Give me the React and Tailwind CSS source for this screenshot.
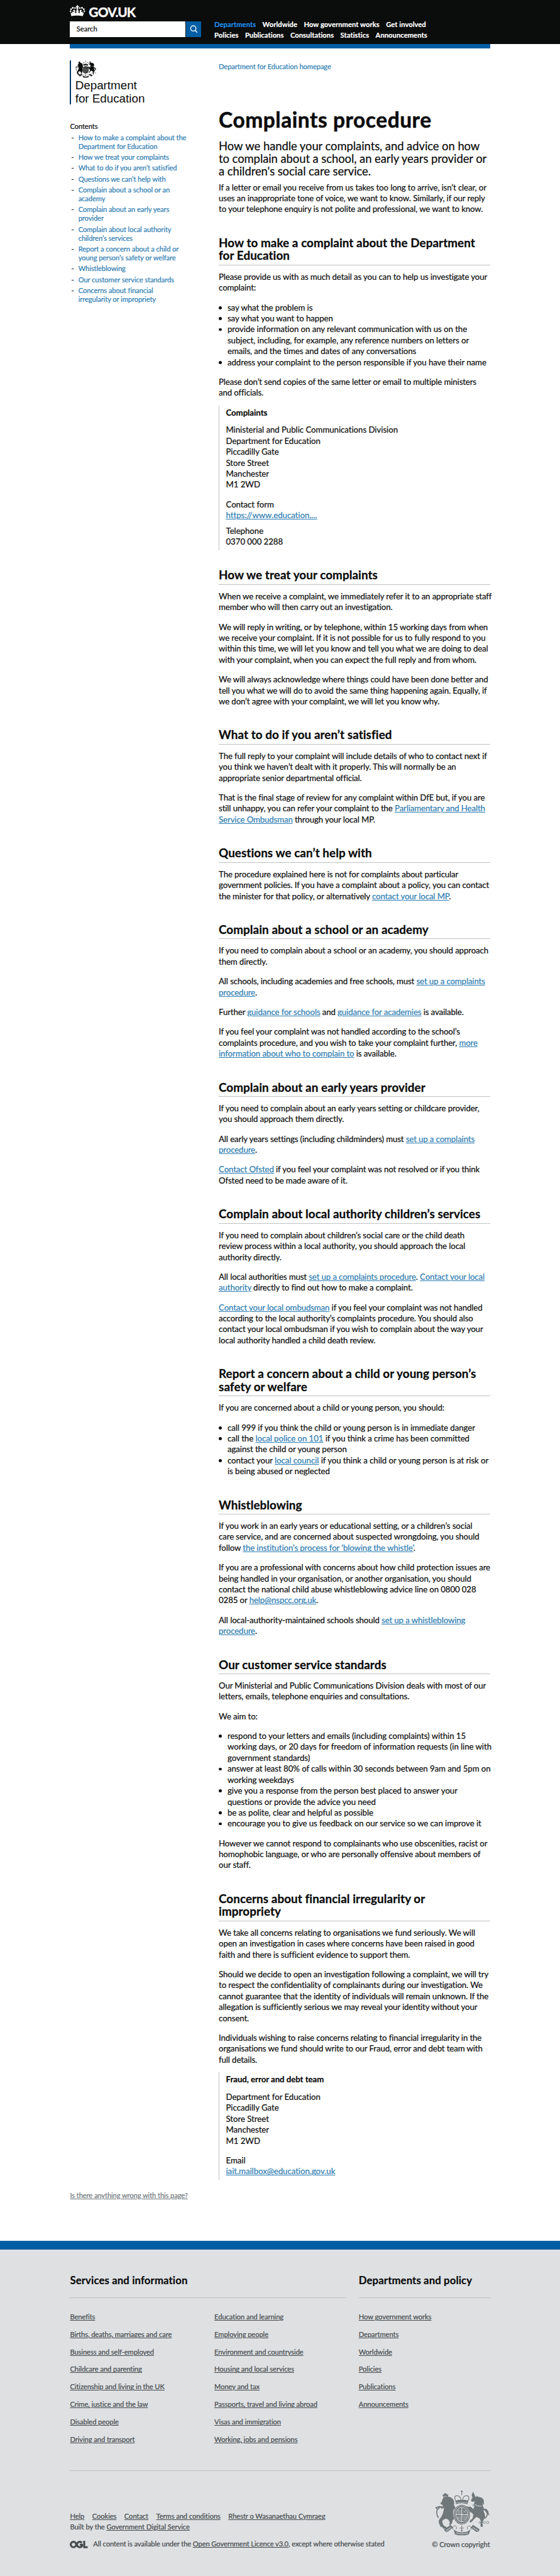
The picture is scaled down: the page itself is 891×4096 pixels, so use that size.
import React from "react";

const A = ({ children }) => <a className="text-[#2e7db2] underline decoration-1 underline-offset-[2px]">{children}</a>;

/* Each child is one line of copy. */
const Lines = ({ items }) =>
  items.map((line, i) => (
    <span key={i} className="block whitespace-nowrap">
      {line}
    </span>
  ));

const P = ({ lines, className = "mt-5" }) => (
  <p className={className}>
    <Lines items={lines} />
  </p>
);

const H2 = ({ lines, className = "mt-[49px]" }) => (
  <h2
    className={`${className} mb-[14.500px] border-b border-[#bfc1c3] pb-[5.500px] text-[27px] leading-[29.500px] font-bold tracking-[0.130px] [-webkit-text-stroke:0.4px]`}
  >
    <Lines items={lines} />
  </h2>
);

const Bullets = ({ items }) => (
  <ul className="mt-5 tracking-[-0.080px]">
    {items.map((lines, i) => (
      <li key={i} className="flex">
        <span className="mt-[9px] mr-[13px] size-[7px] shrink-0 rounded-full bg-[#0b0c0c]" />
        <span>
          <Lines items={lines} />
        </span>
      </li>
    ))}
  </ul>
);

const Crest = ({ className }) => (
  <svg viewBox="28 22 378 310" className={className} fill="none" stroke="currentColor" strokeWidth="4">
    <g fill="currentColor" stroke="none">
      <path d="M84 66l-5-18 8 4 5-9 7-4 6 4 7 8 8-5-3 19-16-3z" />
      <path d="M85 70l14-5 18-1 16 3 14 10 10 13 3 20-2 14 9 10-2 16-9 3-4 18 1 26 6 20-9 8-6 24-13 12-6-3 5-18-10-17-15-7-22 8-5 10 3 16 10 16 14 6 2 10-22 3-8-11-10-2-10-20-4-20 7-14 12-16 10-22 6-24 2-14-16 5-9-10 8-6 12 2-8-14-9-3-3-8 8-6z" />
      <path d="M30 137l12-3 13-5 15 2-8 6-15 4-9 12z" />
      <path d="M290 30l16 36 8 2-4-10 18 8 22 6 12 14 4 26-4 10-7-20 2 24 6 18-1 20 8 20 4 22-16 26-4 20 4 18-12 4-6-12 4-26-8-20-22-12-16 14-18 20-12 4-2-10 20-18 6-24-8-12-16-10-8-20-16-6-3-12 20 6 10-4 10 12 10 6 8-16-2-22 4-14-14 2-11-4 2-12 8-14-6-16z" />
      <path d="M404 195l-14-10-10-16-14-14-10-4 8-5 18 4 12 14 4 18z" />
      <path d="M168 92l4 24 18-4 22-2 24 3 17 4 4-24-20-6h-48z" />
      <circle cx="212" cy="28" r="6" />
      <path d="M90 289l46-30 16 18-40 30-16-4z" />
      <path d="M335 289l-46-30-16 18 40 30 16-4z" />
      <path d="M156 292l28 14 30 4 32-4 25-14-10 32-25 6h-46l-25-6z" />
    </g>
    <path d="M74 132c-14 8-32 14-34 34-2 16 4 32 12 44M360 152c18 6 32 22 26 42-4 14-14 22-24 18" strokeWidth="7" />
    <path d="M172 96c-12-16-12-36 4-38s30 10 32 34M252 96c14-16 12-36-4-38s-28 10-32 34M212 34v20" strokeWidth="5" />
    <path d="M166 110c20-8 72-8 94 0" className="stroke-white/70" strokeWidth="3" />
    <g fill="currentColor" stroke="none">
      <ellipse cx="212" cy="188" rx="57" ry="68" />
    </g>
    <g className="stroke-white/80">
      <ellipse cx="212" cy="188" rx="50" ry="61" strokeWidth="5" strokeDasharray="5 4" />
      <ellipse cx="212" cy="188" rx="40" ry="49" strokeWidth="4" />
      <path d="M212 140v96M173 188h78" strokeWidth="5" />
      <path d="M182 158h24M182 168h24M182 177h24M220 158l22 20M222 176l18-18M184 200c0 20 8 26 20 32M192 198v20M202 198v28M220 199h26M220 209h24M220 219h18" strokeWidth="3" />
    </g>
    <path d="M212 262v42M200 284c0-12 8-8 12 6M224 284c0-12-8-8-12 6M204 298h16" strokeWidth="4" />
    <path d="M156 292c-10-6-8-24 6-26s18 14 10 24M270 292c10-6 8-24-6-26s-18 14-10 24" strokeWidth="4" />
    <path d="M104 298l34-22M322 298l-34-22M172 313c22 8 60 8 84 0" className="stroke-white/80" strokeWidth="7" strokeDasharray="4 3" />
    <g strokeWidth="3">
      <circle cx="294" cy="124" r="6" />
      <circle cx="278" cy="146" r="6" />
      <circle cx="346" cy="216" r="6" />
      <circle cx="336" cy="242" r="6" />
      <circle cx="350" cy="256" r="5" />
      <circle cx="368" cy="242" r="7" />
      <circle cx="390" cy="242" r="8" />
    </g>
    <path d="M306 118c14 12 30 14 42 10" className="stroke-white/80" strokeWidth="6" strokeDasharray="6 4" />
  </svg>
);

const Crown = () => (
  <svg viewBox="0 0 70 52" className="h-[26px] w-[35px] fill-white">
    <circle cx="35" cy="13" r="5" />
    <path d="M33 0h4v5h5v4h-5v4h-4V9h-5V5h5z" />
    <circle cx="24" cy="14" r="3.6" />
    <circle cx="14" cy="13" r="4.2" />
    <circle cx="6" cy="19" r="4" />
    <circle cx="3.500" cy="28" r="3.500" />
    <circle cx="46" cy="14" r="3.6" />
    <circle cx="56" cy="13" r="4.2" />
    <circle cx="64" cy="19" r="4" />
    <circle cx="66.500" cy="28" r="3.500" />
    <path d="M4 33l8 5-2-10c3 5 8 5 9 0l-4-1c0-6 7-7 9-3 2 5-2 8 0 12 4 1 8-2 8-6l-4 1c-1-5 2-6 5-6l-3-6h10l-3 6c3 0 6 1 5 6l-4-1c0 4 4 7 8 6 2-4-2-7 0-12 2-4 9-3 9 3l-4 1c1 5 6 5 9 0l-2 10 8-5-7 18c-14-4-38-4-52 0z" />
  </svg>
);

const CONTENTS = [
  ["How to make a complaint about the", "Department for Education"],
  ["How we treat your complaints"],
  ["What to do if you aren’t satisfied"],
  ["Questions we can’t help with"],
  ["Complain about a school or an", "academy"],
  ["Complain about an early years", "provider"],
  ["Complain about local authority", "children’s services"],
  ["Report a concern about a child or", "young person’s safety or welfare"],
  ["Whistleblowing"],
  ["Our customer service standards"],
  ["Concerns about financial", "irregularity or impropriety"],
];

const FOOTER_COLUMNS = [
  [
    "Benefits",
    "Births, deaths, marriages and care",
    "Business and self-employed",
    "Childcare and parenting",
    "Citizenship and living in the UK",
    "Crime, justice and the law",
    "Disabled people",
    "Driving and transport",
  ],
  [
    "Education and learning",
    "Employing people",
    "Environment and countryside",
    "Housing and local services",
    "Money and tax",
    "Passports, travel and living abroad",
    "Visas and immigration",
    "Working, jobs and pensions",
  ],
  ["How government works", "Departments", "Worldwide", "Policies", "Publications", "Announcements"],
];

const Header = () => (
  <header className="h-[101px] bg-[#0b0c0c]">
    <div className="mx-auto w-[960px]">
      <div className="flex h-[49px] items-start gap-[8px] pt-[12px]">
        <Crown />
        <span className="-mt-[3px] text-[30px] leading-[36px] font-bold tracking-[-1.2px] text-white [-webkit-text-stroke:0.6px]">GOV.UK</span>
      </div>
      <div className="flex">
        <div className="flex h-[36px] w-[264px] items-center bg-white pl-[15px] text-[16px]">Search</div>
        <div className="ml-px flex h-[36px] w-[35px] items-center justify-center bg-[#005ea5]">
          <svg viewBox="0 0 18 18" className="size-[18px] stroke-white" fill="none" strokeWidth="2">
            <circle cx="8" cy="7.500" r="6" />
            <path d="M12 12l5 5" />
          </svg>
        </div>
        <nav className="-mt-[4px] ml-[30px] text-[16px] leading-[24px] font-bold tracking-[0.130px] text-white">
          <div className="flex gap-[15px] whitespace-nowrap">
            <a className="text-[#1d8feb]">Departments</a>
            <a>Worldwide</a>
            <a>How government works</a>
            <a>Get involved</a>
          </div>
          <div className="flex gap-[15px] whitespace-nowrap">
            <a>Policies</a>
            <a>Publications</a>
            <a>Consultations</a>
            <a>Statistics</a>
            <a>Announcements</a>
          </div>
        </nav>
      </div>
    </div>
  </header>
);

const Sidebar = () => (
  <aside className="w-[340px] shrink-0 pt-[27px] text-[16px] leading-[20px] tracking-[-0.1px]">
    <div className="h-[100px] border-l-[3px] border-[#003a69] pl-[9px] text-[#0b0c0c]">
      <Crest className="h-[40px] w-[48px]" />
      <div className="mt-[3px] font-['Liberation_Sans'] text-[27px] leading-[30px] tracking-normal whitespace-nowrap [-webkit-text-stroke:0px]">
        Department
        <br />
        for Education
      </div>
    </div>
    <h2 className="mt-[41px]">Contents</h2>
    <ol className="mt-[5px] flex flex-col gap-[5px]">
      {CONTENTS.map((lines, i) => (
        <li key={i} className="flex">
          <span className="w-[19px] pl-[3px]">-</span>
          <a className="text-[#2e7db2]">
            <Lines items={lines} />
          </a>
        </li>
      ))}
    </ol>
  </aside>
);

const Article = () => (
  <article className="w-[620px] pt-[31px] text-[19px] leading-[25px] tracking-[-0.160px]">
    <a className="block text-[16px] leading-[20px] tracking-[-0.1px] text-[#2e7db2]">Department for Education homepage</a>
    <h1 className="mt-[87px] text-[48px] leading-[50px] font-bold tracking-[0.850px] whitespace-nowrap [-webkit-text-stroke:0.8px]">
      Complaints procedure
    </h1>
    <p className="mt-[20px] text-[26.500px] leading-[29px] tracking-[-0.1px]">
      <Lines
        items={[
          "How we handle your complaints, and advice on how",
          "to complain about a school, an early years provider or",
          "a children's social care service.",
        ]}
      />
    </p>
    <P
      className="mt-[10px]"
      lines={[
        "If a letter or email you receive from us takes too long to arrive, isn’t clear, or",
        "uses an inappropriate tone of voice, we want to know. Similarly, if our reply",
        "to your telephone enquiry is not polite and professional, we want to know.",
      ]}
    />

    <H2 lines={["How to make a complaint about the Department", "for Education"]} />
    <P className="" lines={["Please provide us with as much detail as you can to help us investigate your", "complaint:"]} />
    <Bullets
      items={[
        ["say what the problem is"],
        ["say what you want to happen"],
        [
          "provide information on any relevant communication with us on the",
          "subject, including, for example, any reference numbers on letters or",
          "emails, and the times and dates of any conversations",
        ],
        ["address your complaint to the person responsible if you have their name"],
      ]}
    />
    <P lines={["Please don’t send copies of the same letter or email to multiple ministers", "and officials."]} />
    <div className="mt-[16px] border-l border-[#bfc1c3] pt-[4px] pb-[6px] pl-[15px] tracking-[-0.050px]">
      <h3 className="font-bold">Complaints</h3>
      <P
        className="mt-[15px]"
        lines={[
          "Ministerial and Public Communications Division",
          "Department for Education",
          "Piccadilly Gate",
          "Store Street",
          "Manchester",
          "M1 2WD",
        ]}
      />
      <P lines={["Contact form", <A>https://www.education....</A>]} />
      <P className="mt-[10px]" lines={["Telephone", "0370 000 2288"]} />
    </div>

    <H2 className="mt-[43px]" lines={["How we treat your complaints"]} />
    <P className="" lines={["When we receive a complaint, we immediately refer it to an appropriate staff", "member who will then carry out an investigation."]} />
    <P
      lines={[
        "We will reply in writing, or by telephone, within 15 working days from when",
        "we receive your complaint. If it is not possible for us to fully respond to you",
        "within this time, we will let you know and tell you what we are doing to deal",
        "with your complaint, when you can expect the full reply and from whom.",
      ]}
    />
    <P
      lines={[
        "We will always acknowledge where things could have been done better and",
        "tell you what we will do to avoid the same thing happening again. Equally, if",
        "we don’t agree with your complaint, we will let you know why.",
      ]}
    />

    <H2 lines={["What to do if you aren’t satisfied"]} />
    <P
      className=""
      lines={[
        "The full reply to your complaint will include details of who to contact next if",
        "you think we haven’t dealt with it properly. This will normally be an",
        "appropriate senior departmental official.",
      ]}
    />
    <P
      lines={[
        "That is the final stage of review for any complaint within DfE but, if you are",
        <>still unhappy, you can refer your complaint to the <A>Parliamentary and Health</A></>,
        <><A>Service Ombudsman</A> through your local MP.</>,
      ]}
    />

    <H2 lines={["Questions we can’t help with"]} />
    <P
      className=""
      lines={[
        "The procedure explained here is not for complaints about particular",
        "government policies. If you have a complaint about a policy, you can contact",
        <>the minister for that policy, or alternatively <A>contact your local MP</A>.</>,
      ]}
    />

    <H2 lines={["Complain about a school or an academy"]} />
    <P className="" lines={["If you need to complain about a school or an academy, you should approach", "them directly."]} />
    <P
      lines={[
        <>All schools, including academies and free schools, must <A>set up a complaints</A></>,
        <><A>procedure</A>.</>,
      ]}
    />
    <P lines={[<>Further <A>guidance for schools</A> and <A>guidance for academies</A> is available.</>]} />
    <P
      lines={[
        "If you feel your complaint was not handled according to the school’s",
        <>complaints procedure, and you wish to take your complaint further, <A>more</A></>,
        <><A>information about who to complain to</A> is available.</>,
      ]}
    />

    <H2 lines={["Complain about an early years provider"]} />
    <P className="" lines={["If you need to complain about an early years setting or childcare provider,", "you should approach them directly."]} />
    <P
      lines={[
        <>All early years settings (including childminders) must <A>set up a complaints</A></>,
        <><A>procedure</A>.</>,
      ]}
    />
    <P
      lines={[
        <><A>Contact Ofsted</A> if you feel your complaint was not resolved or if you think</>,
        "Ofsted need to be made aware of it.",
      ]}
    />

    <H2 lines={["Complain about local authority children’s services"]} />
    <P
      className=""
      lines={[
        "If you need to complain about children’s social care or the child death",
        "review process within a local authority, you should approach the local",
        "authority directly.",
      ]}
    />
    <P
      lines={[
        <>All local authorities must <A>set up a complaints procedure</A>. <A>Contact your local</A></>,
        <><A>authority</A> directly to find out how to make a complaint.</>,
      ]}
    />
    <P
      lines={[
        <><A>Contact your local ombudsman</A> if you feel your complaint was not handled</>,
        "according to the local authority’s complaints procedure. You should also",
        "contact your local ombudsman if you wish to complain about the way your",
        "local authority handled a child death review.",
      ]}
    />

    <H2 lines={["Report a concern about a child or young person’s", "safety or welfare"]} />
    <P className="" lines={["If you are concerned about a child or young person, you should:"]} />
    <Bullets
      items={[
        ["call 999 if you think the child or young person is in immediate danger"],
        [
          <>call the <A>local police on 101</A> if you think a crime has been committed</>,
          "against the child or young person",
        ],
        [
          <>contact your <A>local council</A> if you think a child or young person is at risk or</>,
          "is being abused or neglected",
        ],
      ]}
    />

    <H2 lines={["Whistleblowing"]} />
    <P
      className=""
      lines={[
        "If you work in an early years or educational setting, or a children’s social",
        "care service, and are concerned about suspected wrongdoing, you should",
        <>follow <A>the institution’s process for ‘blowing the whistle’</A>.</>,
      ]}
    />
    <P
      lines={[
        "If you are a professional with concerns about how child protection issues are",
        "being handled in your organisation, or another organisation, you should",
        "contact the national child abuse whistleblowing advice line on 0800 028",
        <>0285 or <A>help@nspcc.org.uk</A>.</>,
      ]}
    />
    <P
      lines={[
        <>All local-authority-maintained schools should <A>set up a whistleblowing</A></>,
        <><A>procedure</A>.</>,
      ]}
    />

    <H2 lines={["Our customer service standards"]} />
    <P className="" lines={["Our Ministerial and Public Communications Division deals with most of our", "letters, emails, telephone enquiries and consultations."]} />
    <P lines={["We aim to:"]} />
    <Bullets
      items={[
        [
          "respond to your letters and emails (including complaints) within 15",
          "working days, or 20 days for freedom of information requests (in line with",
          "government standards)",
        ],
        ["answer at least 80% of calls within 30 seconds between 9am and 5pm on", "working weekdays"],
        ["give you a response from the person best placed to answer your", "questions or provide the advice you need"],
        ["be as polite, clear and helpful as possible"],
        ["encourage you to give us feedback on our service so we can improve it"],
      ]}
    />
    <P
      lines={[
        "However we cannot respond to complainants who use obscenities, racist or",
        "homophobic language, or who are personally offensive about members of",
        "our staff.",
      ]}
    />

    <H2 lines={["Concerns about financial irregularity or", "impropriety"]} />
    <P
      className=""
      lines={[
        "We take all concerns relating to organisations we fund seriously. We will",
        "open an investigation in cases where concerns have been raised in good",
        "faith and there is sufficient evidence to support them.",
      ]}
    />
    <P
      lines={[
        "Should we decide to open an investigation following a complaint, we will try",
        "to respect the confidentiality of complainants during our investigation. We",
        "cannot guarantee that the identity of individuals will remain unknown. If the",
        "allegation is sufficiently serious we may reveal your identity without your",
        "consent.",
      ]}
    />
    <P
      lines={[
        "Individuals wishing to raise concerns relating to financial irregularity in the",
        "organisations we fund should write to our Fraud, error and debt team with",
        "full details.",
      ]}
    />
    <div className="mt-[16px] border-l border-[#bfc1c3] pt-[4px] pb-[6px] pl-[15px] tracking-[-0.050px]">
      <h3 className="font-bold">Fraud, error and debt team</h3>
      <P className="mt-[15px]" lines={["Department for Education", "Piccadilly Gate", "Store Street", "Manchester", "M1 2WD"]} />
      <P lines={["Email", <A>iait.mailbox@education.gov.uk</A>]} />
    </div>
  </article>
);

const FooterLinks = ({ items }) => (
  <ul className="w-[330px] shrink-0">
    {items.map((t) => (
      <li key={t} className="mb-5 whitespace-nowrap">
        <a className="underline decoration-1 underline-offset-[2px]">{t}</a>
      </li>
    ))}
  </ul>
);

const Footer = () => (
  <footer className="h-[769px] border-t-[20.200px] border-[#005ea5] bg-[#dee0e2] text-[16px] leading-[20px] tracking-[-0.080px] text-[#454a4c]">
    <div className="mx-auto w-[960px] pt-[57px]">
      <div className="flex gap-[30px] text-[24px] leading-[30px] font-bold tracking-[0.2px] text-[#0b0c0c]">
        <h2 className="h-[54px] w-[630px] border-b border-[#bfc1c3]">Services and information</h2>
        <h2 className="h-[54px] w-[300px] border-b border-[#bfc1c3]">Departments and policy</h2>
      </div>
      <div className="mt-[33px] flex h-[362px] border-b border-[#bfc1c3]">
        {FOOTER_COLUMNS.map((items, i) => (
          <FooterLinks key={i} items={items} />
        ))}
      </div>
      <div className="flex justify-between pt-[45px]">
        <div className="pt-[47px] leading-[24px]">
          <div className="flex gap-[18px] whitespace-nowrap">
            {["Help", "Cookies", "Contact", "Terms and conditions", "Rhestr o Wasanaethau Cymraeg"].map((t) => (
              <a key={t} className="underline decoration-1 underline-offset-[2px]">
                {t}
              </a>
            ))}
          </div>
          <p className="whitespace-nowrap">
            Built by the <a className="underline decoration-1 underline-offset-[2px]">Government Digital Service</a>
          </p>
          <div className="mt-[16px] flex items-center whitespace-nowrap">
            <svg viewBox="0 0 41 17" className="h-[17px] w-[41px]" fill="none" stroke="currentColor" strokeWidth="4.5">
              <circle cx="8.500" cy="8.500" r="6.200" />
              <path d="M27.500 4.500A6.200 6.200 0 1 0 28 12V9h-5M33 0v14.700h8" />
            </svg>
            <p className="ml-[12px] tracking-[-0.120px]">
              All content is available under the <a className="underline decoration-1 underline-offset-[2px]">Open Government Licence v3.0</a>, except where
              otherwise stated
            </p>
          </div>
        </div>
        <div className="flex flex-col items-end">
          <Crest className="h-[103px] w-[126px] text-[#6f777b]" />
          <p className="mt-[10px]">© Crown copyright</p>
        </div>
      </div>
    </div>
  </footer>
);

export default function App() {
  return (
    <div className="overflow-hidden bg-white font-['Lato',sans-serif] text-[#0b0c0c] [-webkit-text-stroke:0.3px] [zoom:0.696]">
      <Header />
      <main className="mx-auto flex h-[5018px] w-[960px] flex-col border-t-[10.100px] border-[#005ea5]">
        <div className="flex">
          <Sidebar />
          <Article />
        </div>
        <a className="mt-[26px] text-[16px] leading-[20px] tracking-[-0.120px] text-[#6f777b] underline underline-offset-[2px]">
          Is there anything wrong with this page?
        </a>
      </main>
      <Footer />
    </div>
  );
}
